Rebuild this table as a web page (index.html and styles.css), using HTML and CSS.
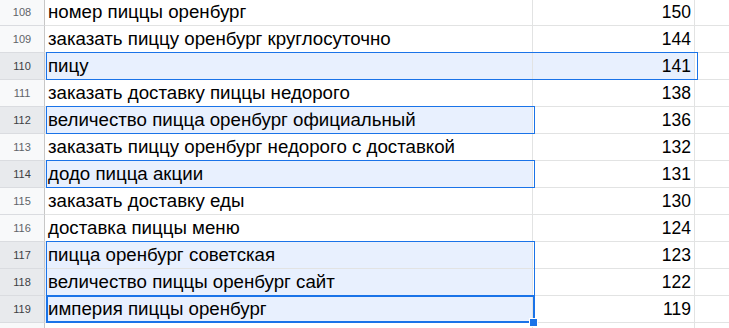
FILE: index.html
```html
<!DOCTYPE html>
<html lang="ru">
<head>
<meta charset="utf-8">
<title>Sheet</title>
<link rel="stylesheet" href="styles.css">
</head>
<body>
<div class="sheet">
  <div class="row"><div class="rh">108</div><div class="c a">номер пиццы оренбург</div><div class="c b">150</div><div class="c x"></div></div>
  <div class="row"><div class="rh">109</div><div class="c a">заказать пиццу оренбург круглосуточно</div><div class="c b">144</div><div class="c x"></div></div>
  <div class="row"><div class="rh on">110</div><div class="c a hl">пицу</div><div class="c b hl">141</div><div class="c x"></div></div>
  <div class="row"><div class="rh">111</div><div class="c a">заказать доставку пиццы недорого</div><div class="c b">138</div><div class="c x"></div></div>
  <div class="row"><div class="rh on">112</div><div class="c a hl">величество пицца оренбург официальный</div><div class="c b">136</div><div class="c x"></div></div>
  <div class="row"><div class="rh">113</div><div class="c a">заказать пиццу оренбург недорого с доставкой</div><div class="c b">132</div><div class="c x"></div></div>
  <div class="row"><div class="rh on">114</div><div class="c a hl">додо пицца акции</div><div class="c b">131</div><div class="c x"></div></div>
  <div class="row"><div class="rh">115</div><div class="c a">заказать доставку еды</div><div class="c b">130</div><div class="c x"></div></div>
  <div class="row"><div class="rh">116</div><div class="c a">доставка пиццы меню</div><div class="c b">124</div><div class="c x"></div></div>
  <div class="row"><div class="rh on">117</div><div class="c a hl">пицца оренбург советская</div><div class="c b">123</div><div class="c x"></div></div>
  <div class="row"><div class="rh on">118</div><div class="c a hl">величество пиццы оренбург сайт</div><div class="c b">122</div><div class="c x"></div></div>
  <div class="row"><div class="rh on">119</div><div class="c a hl">империя пиццы оренбург</div><div class="c b">119</div><div class="c x"></div></div>
  <div class="row"><div class="rh"></div><div class="c a"></div><div class="c b"></div><div class="c x"></div></div>

  <div class="sel sel-110"></div>
  <div class="sel sel-112"></div>
  <div class="sel sel-114"></div>
  <div class="sel sel-117"></div>
  <div class="active"></div>
  <div class="handle"></div>
</div>
</body>
</html>
```

FILE: styles.css
```css
html, body {
  margin: 0;
  padding: 0;
  background: #fff;
  overflow: hidden;
}

.sheet {
  position: relative;
  margin-top: -1px;
  font-family: "Liberation Sans", Arial, sans-serif;
}

.row {
  display: grid;
  grid-template-columns: 45px 488px 162px 1fr;
  height: 27px;
}

.rh, .c {
  height: 26px;
  border-right: 1px solid #e2e3e3;
  border-bottom: 1px solid #e2e3e3;
}

.rh {
  background: #f8f9fa;
  color: #5f6368;
  font-size: 11px;
  line-height: 26px;
  text-align: center;
  border-right-color: #c7c7c7;
  border-bottom-color: #dadce0;
}

.rh.on {
  background: #e8eaed;
  color: #3c4043;
}

.c {
  font-size: 17.5px;
  line-height: 26px;
  color: #000;
  white-space: nowrap;
  overflow: hidden;
}

.a {
  padding-left: 3px;
  font-size: 18.7px;
}

.b {
  text-align: right;
  padding-right: 3px;
}

.x {
  border-right: none;
}

.hl {
  background: #e8f0fe;
}

.sel {
  position: absolute;
  left: 46px;
  width: 489px;
  height: 28px;
  box-sizing: border-box;
  border: 1px solid #1a73e8;
  pointer-events: none;
}

.sel-110 { top: 53px; width: 652px; }
.sel-112 { top: 107px; }
.sel-114 { top: 161px; }
.sel-117 { top: 242px; height: 82px; }

.active {
  position: absolute;
  left: 46px;
  top: 296px;
  width: 489px;
  height: 28px;
  box-sizing: border-box;
  border: 2px solid #1a73e8;
}

.handle {
  position: absolute;
  left: 530px;
  top: 320px;
  width: 7px;
  height: 7px;
  background: #1a73e8;
  outline: 1px solid #fff;
}
```
